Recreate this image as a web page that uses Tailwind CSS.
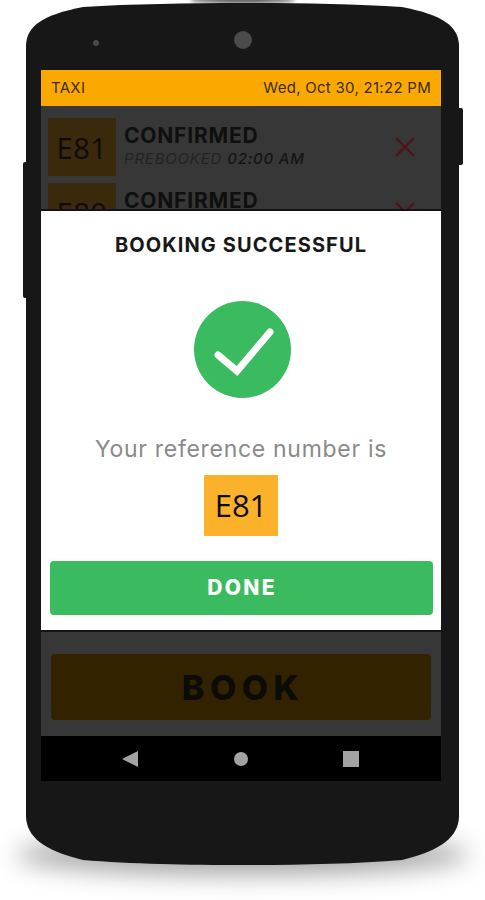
<!DOCTYPE html>
<html>
<head>
<meta charset="utf-8">
<script src="https://cdn.jsdelivr.net/npm/@tailwindcss/browser@4"></script>
</head>
<body class="bg-white">
<div class="relative w-[485px] h-[900px] overflow-hidden bg-white font-['Inter','Liberation_Sans',sans-serif]">
  <!-- device drop shadow and body -->
  <div class="absolute left-[16px] top-[835px] w-[453px] h-[40px] rounded-[50%] bg-black/35 blur-[12px]"></div>
  <div class="absolute left-[190px] top-[-3px] w-[105px] h-[6px] rounded-[50%] bg-black/70 blur-[2px]"></div>
  <div class="absolute left-[23px] top-[162px] w-[6px] h-[136px] rounded-l-[2px] bg-[#171717]"></div>
  <div class="absolute left-[456px] top-[108px] w-[7px] h-[57px] rounded-r-[2px] bg-[#171717]"></div>
  <svg class="absolute left-0 top-0" width="485" height="900" viewBox="0 0 485 900">
    <path fill="#171717" d="M26 45C27 26 42 15 83 7C130 4 190 3 242 3C295 3 355 4 402 7C443 15 458 26 459 45L459 817C458 836 443 850 402 860C355 864 295 865 242 865C190 865 130 864 83 860C42 850 27 836 26 817Z"/>
    <circle cx="243" cy="40" r="9" fill="#4b4b4b"/>
    <circle cx="96" cy="43" r="3" fill="#4a4a4a"/>
  </svg>

  <!-- screen -->
  <div class="relative ml-[41px] pt-[70px] w-[400px]">
    <div class="flex h-[36px] items-center justify-between bg-[#fba900] pl-[10px] pr-[10px] text-[15px] text-[#3b2c0a]">
      <span class="tracking-[0.3px]">TAXI</span>
      <span class="tracking-[0.28px]">Wed, Oct 30, 21:22 PM</span>
    </div>
    <div class="relative h-[630px] overflow-hidden bg-[#373737]">
      <div class="flex flex-col gap-[7px] pl-[7px] pr-[26px] pt-[12px]">
        <div class="flex h-[58px] items-center">
          <div class="flex h-[58px] w-[68px] shrink-0 items-center justify-center bg-[#3a2a0b] pt-[2px] font-['Open_Sans',sans-serif] text-[29px] tracking-[0.5px] text-[#0c0c0c]">E81</div>
          <div class="ml-[8px] flex flex-1 flex-col">
            <span class="-mt-[2px] text-[21px] font-bold leading-[24px] tracking-[0.8px] text-[#0f0f0f]">CONFIRMED</span>
            <span class="mt-[1px] text-[15px] italic leading-[20px] tracking-[0.8px] text-[#232323]">PREBOOKED <span class="font-medium text-[#141414]">02:00 AM</span></span>
          </div>
          <svg width="20" height="20" viewBox="0 0 20 20" fill="none" stroke="#4f1316" stroke-width="2"><path d="M1 1L19 19M19 1L1 19"/></svg>
        </div>
        <div class="flex h-[58px] items-start">
          <div class="flex h-[58px] w-[68px] shrink-0 items-center justify-center bg-[#3a2a0b] pt-[2px] font-['Open_Sans',sans-serif] text-[29px] tracking-[0.5px] text-[#0c0c0c]">E80</div>
          <div class="ml-[8px] flex flex-1 flex-col pt-[6px]">
            <span class="text-[21px] font-bold leading-[24px] tracking-[0.8px] text-[#0f0f0f]">CONFIRMED</span>
          </div>
          <svg class="mt-[19px]" width="20" height="20" viewBox="0 0 20 20" fill="none" stroke="#4f1316" stroke-width="2"><path d="M1 1L19 19M19 1L1 19"/></svg>
        </div>
      </div>

      <!-- BOOK -->
      <div class="absolute bottom-[16px] left-[10px] flex h-[66px] w-[380px] items-center justify-center rounded-[4px] bg-[#332200] pl-[4px] text-[34px] font-extrabold tracking-[5.5px] text-[#0b0b08]">BOOK</div>

      <!-- modal -->
      <div class="absolute left-0 top-[103px] flex h-[423px] w-[400px] flex-col items-center border-y-2 border-y-[#141414] bg-white">
        <h2 class="mt-[22px] text-[20px] font-bold leading-[24px] tracking-[1.1px] text-[#181818]">BOOKING SUCCESSFUL</h2>
        <svg class="mt-[44px] ml-[2px]" width="97" height="97" viewBox="0 0 97 97">
          <circle cx="48.5" cy="48.5" r="48.5" fill="#3abb60"/>
          <path d="M24 54L43 70L76 31" fill="none" stroke="#fff" stroke-width="7" stroke-linecap="round" stroke-linejoin="miter"/>
        </svg>
        <p class="mt-[37px] text-[23px] leading-[28px] tracking-[0.7px] text-[#8a8a8a]">Your reference number is</p>
        <div class="mt-[12px] flex h-[61px] w-[74px] items-center justify-center bg-[#fbb12a] font-['Open_Sans',sans-serif] text-[31px] text-[#0c0c0c]">E81</div>
        <div class="mt-[25px] flex h-[54px] w-[383px] items-center justify-center rounded-[4px] bg-[#3abb60] pl-[2px] text-[21px] font-extrabold tracking-[2.3px] text-white">DONE</div>
      </div>
    </div>
    <!-- navigation bar -->
    <div class="flex h-[45px] items-center bg-black">
      <svg class="ml-[81px]" width="16" height="16" viewBox="0 0 16 16"><path d="M16 0V16L0 8Z" fill="#a3a3a3"/></svg>
      <div class="ml-[96px] h-[14px] w-[14px] rounded-full bg-[#a3a3a3]"></div>
      <div class="ml-[95px] h-[16px] w-[16px] bg-[#a3a3a3]"></div>
    </div>
  </div>
</div>
</body>
</html>
